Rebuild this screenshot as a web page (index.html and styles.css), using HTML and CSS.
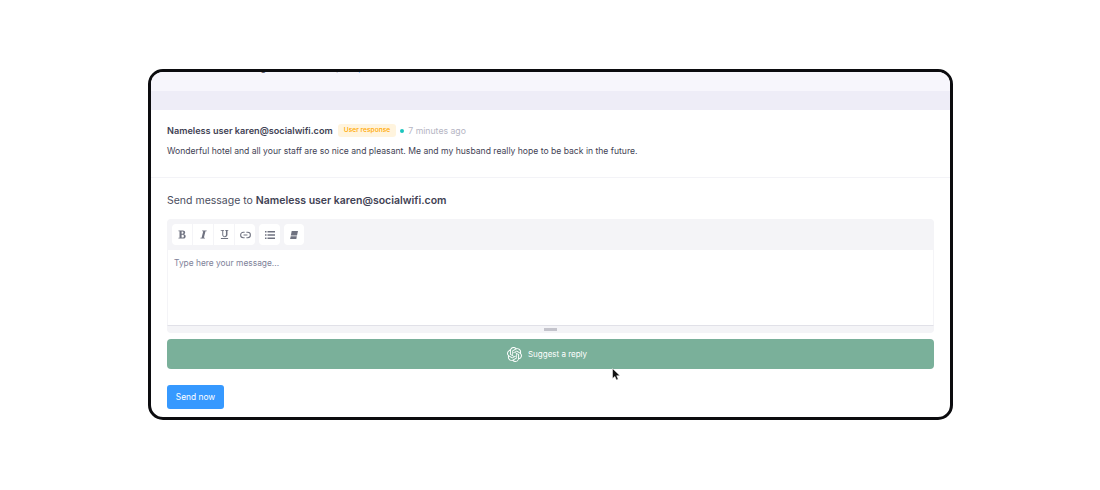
FILE: index.html
```html
<!DOCTYPE html>
<html lang="en">
<head>
  <meta charset="UTF-8">
  <title>Send message</title>
  <link rel="stylesheet" href="styles.css">
</head>
<body>
  <div class="window">
    <div class="prev-msg">
      <p class="prev-text">The breakfast and lounge were all so nice, see <span class="prev-link">photo</span> on the side.</p>
    </div>
    <div class="divider-band"></div>

    <div class="message">
      <div class="message-head">
        <span class="author">Nameless user karen@socialwifi.com</span>
        <span class="badge">User response</span>
        <span class="dot"></span>
        <span class="time">7 minutes ago</span>
      </div>
      <p class="message-text">Wonderful hotel and all your staff are so nice and pleasant. Me and my husband really hope to be back in the future.</p>
    </div>

    <div class="reply">
      <h2 class="reply-title">Send message to <b>Nameless user karen@socialwifi.com</b></h2>

      <div class="editor">
        <div class="toolbar">
          <div class="tool-group">
            <button class="tool"><svg width="9" height="9" viewBox="0 0 10 10"><path d="M.5 .5h5c3 0 3.200 3.700.9 4.200 3 .4 2.900 4.800-.4 4.800H.5V8.500h1.200v-7H.5zM4 1.600v2.600h1c1.400 0 1.400-2.600 0-2.600zM4 5.200v3.200h1.300c1.700 0 1.700-3.200 0-3.200z" fill="#6f7280"/></svg></button>
            <button class="tool"><svg width="9" height="9" viewBox="0 0 10 10"><path d="M3.500 .5h5v1H7.200L5.400 8.500h1.200v1h-5v-1h1.300l1.800-7H3.500z" fill="#6f7280"/></svg></button>
            <button class="tool"><svg width="9" height="11" viewBox="0 0 10 11"><path d="M.8 .5h3.700v.9h-.9v4.400c0 2.200 3 2.200 3 0V1.400h-.9V.5h3.500v.9h-.9v4.400c0 3.600-5.800 3.600-5.800 0V1.400H.8zM1 9.500h8v1.100H1z" fill="#6f7280"/></svg></button>
            <button class="tool"><svg width="11" height="8" viewBox="0 0 12 9" fill="none" stroke="#6f7280" stroke-width="1.200"><path d="M5 1.500H3.500a3 3 0 0 0 0 6H5M7 1.500h1.500a3 3 0 0 1 0 6H7M3.800 4.500h4.400"/></svg></button>
          </div>
          <div class="tool-group">
            <button class="tool tool-wide"><svg width="10" height="8" viewBox="0 0 10 8" fill="#6f7280"><path d="M0 0h1.500v1.500H0zM0 3.200h1.500v1.500H0zM0 6.500h1.500V8H0zM2.500 0H10v1.500H2.500zM2.500 3.200H10v1.500H2.500zM2.500 6.500H10V8H2.500z"/></svg></button>
          </div>
          <div class="tool-group">
            <button class="tool"><svg width="8" height="8" viewBox="0 0 8 8" fill="#6f7280"><path d="M1.700 0H8L7 4.500H.8z"/><path d="M.7 5.300h6.100L6.300 8H.1z"/></svg></button>
          </div>
        </div>
        <div class="editor-body">Type here your message...</div>
        <div class="resize-bar"><span class="resize-grip"></span></div>
      </div>

      <button class="suggest">
        <svg class="ai-icon" width="15" height="15" viewBox="0 0 24 24"><path fill="#fff" d="M22.2819 9.8211a5.9847 5.9847 0 0 0-.5157-4.9108 6.0462 6.0462 0 0 0-6.5098-2.9A6.0651 6.0651 0 0 0 4.9807 4.1818a5.9847 5.9847 0 0 0-3.9977 2.9 6.0462 6.0462 0 0 0 .7427 7.0966 5.98 5.98 0 0 0 .511 4.9107 6.051 6.051 0 0 0 6.5146 2.9001A5.9847 5.9847 0 0 0 13.2599 24a6.0557 6.0557 0 0 0 5.7718-4.2058 5.9894 5.9894 0 0 0 3.9977-2.9001 6.0557 6.0557 0 0 0-.7475-7.0729zm-9.022 12.6081a4.4755 4.4755 0 0 1-2.8764-1.0408l.1419-.0804 4.7783-2.7582a.7948.7948 0 0 0 .3927-.6813v-6.7369l2.02 1.1686a.071.071 0 0 1 .038.052v5.5826a4.504 4.504 0 0 1-4.4945 4.4944zm-9.6607-4.1254a4.4708 4.4708 0 0 1-.5346-3.0137l.142.0852 4.783 2.7582a.7712.7712 0 0 0 .7806 0l5.8428-3.3685v2.3324a.0804.0804 0 0 1-.0332.0615L9.74 19.9502a4.4992 4.4992 0 0 1-6.1408-1.6464zM2.3408 7.8956a4.485 4.485 0 0 1 2.3655-1.9728V11.6a.7664.7664 0 0 0 .3879.6765l5.8144 3.3543-2.0201 1.1685a.0757.0757 0 0 1-.071 0l-4.8303-2.7865A4.504 4.504 0 0 1 2.3408 7.872zm16.5963 3.8558L13.1038 8.364 15.1192 7.2a.0757.0757 0 0 1 .071 0l4.8303 2.7913a4.4944 4.4944 0 0 1-.6765 8.1042v-5.6772a.79.79 0 0 0-.407-.667zm2.0107-3.0231l-.142-.0852-4.7735-2.7818a.7759.7759 0 0 0-.7854 0L9.409 9.2297V6.8974a.0662.0662 0 0 1 .0284-.0615l4.8303-2.7866a4.4992 4.4992 0 0 1 6.6802 4.66zM8.3065 12.863l-2.02-1.1638a.0804.0804 0 0 1-.038-.0567V6.0742a4.4992 4.4992 0 0 1 7.3757-3.4537l-.142.0805L8.704 5.459a.7948.7948 0 0 0-.3927.6813zm1.0976-2.3654l2.602-1.4998 2.6069 1.4998v2.9994l-2.5974 1.4997-2.6067-1.4997Z"/></svg>
        Suggest a reply
      </button>

      <button class="send">Send now</button>
    </div>

    <svg class="cursor" width="9" height="13" viewBox="0 0 9 13"><path d="M.5.500v10l2.400-2.100 1.500 3.600 1.800-.8-1.500-3.500H8z" fill="#111" stroke="#fff" stroke-width=".5"/></svg>
  </div>
</body>
</html>
```

FILE: styles.css
```css
html, body {
  margin: 0;
  padding: 0;
  background: #fff;
}

body {
  font-family: "Inter", "Liberation Sans", sans-serif;
  color: #3f4254;
  height: 490px;
  overflow: hidden;
}

.window {
  position: relative;
  box-sizing: border-box;
  width: 805px;
  height: 351px;
  margin: 69px 0 0 148px;
  border: 3px solid #0c0c0f;
  border-radius: 15px;
  overflow: hidden;
  background: #fff;
}

.prev-msg {
  height: 19px;
  background: #f7f6fc;
  overflow: hidden;
}

.prev-text {
  margin: -10px 0 0 16px;
  font-size: 8.600px;
  line-height: 12px;
  color: #3f4254;
}

.prev-link {
  color: #3699ff;
}

.divider-band {
  height: 19px;
  background: #eeedf7;
}

.message {
  height: 68px;
  box-sizing: border-box;
  padding: 14px 16px 0;
  border-bottom: 1px solid #f3f3f7;
}

.message-head {
  display: flex;
  align-items: center;
  height: 13px;
}

.author {
  font-size: 9.150px;
  font-weight: 600;
  color: #3f4254;
}

.badge {
  margin-left: 5px;
  padding: 0 6px;
  height: 13px;
  line-height: 13px;
  border-radius: 3px;
  background: #fff4de;
  color: #ffa800;
  font-size: 6.700px;
  font-weight: 500;
}

.dot {
  width: 4px;
  height: 4px;
  margin-left: 4px;
  border-radius: 50%;
  background: #1bc5bd;
}

.time {
  margin-left: 4px;
  font-size: 8.700px;
  color: #b5b5c3;
}

.message-text {
  margin: 8px 0 0;
  font-size: 8.600px;
  line-height: 13px;
  color: #3f4254;
}

.reply {
  padding: 15px 16px 0;
}

.reply-title {
  margin: 0;
  font-size: 10.500px;
  line-height: 15px;
  font-weight: 400;
  color: #4a4d5e;
}

.reply-title b {
  font-weight: 600;
  color: #3f4254;
}

.editor {
  margin-top: 11px;
  border-radius: 4px;
  background: #f4f4f7;
  overflow: hidden;
}

.toolbar {
  display: flex;
  gap: 4px;
  height: 31px;
  box-sizing: border-box;
  padding: 5px;
}

.tool-group {
  display: flex;
  gap: 1px;
  border-radius: 4px;
  overflow: hidden;
}

.tool {
  display: flex;
  align-items: center;
  justify-content: center;
  width: 20px;
  height: 21px;
  padding: 0;
  border: none;
  background: #fff;
}

.tool-wide {
  width: 21px;
}

.editor-body {
  height: 76px;
  box-sizing: border-box;
  padding: 7px 6px;
  background: #fff;
  border: 1px solid #f4f4f7;
  border-top: none;
  border-bottom: 1px solid #e1e1e8;
  font-size: 8.400px;
  line-height: 12px;
  color: #7e8299;
}

.resize-bar {
  display: flex;
  align-items: center;
  justify-content: center;
  height: 7px;
}

.resize-grip {
  width: 13px;
  height: 3px;
  background: #c4c4cc;
}

.suggest {
  display: flex;
  align-items: center;
  justify-content: center;
  gap: 6px;
  width: 100%;
  height: 30px;
  margin-top: 6px;
  padding: 0 7px 0 0;
  border: none;
  border-radius: 4px;
  background: #7ab09a;
  color: #fff;
  font-family: inherit;
  font-size: 8px;
}

.send {
  display: block;
  width: 57px;
  height: 24px;
  margin-top: 16px;
  padding: 0;
  border: none;
  border-radius: 3px;
  background: #3699ff;
  color: #fff;
  font-family: inherit;
  font-size: 8.400px;
}

.cursor {
  position: absolute;
  left: 461px;
  top: 296px;
}
```
